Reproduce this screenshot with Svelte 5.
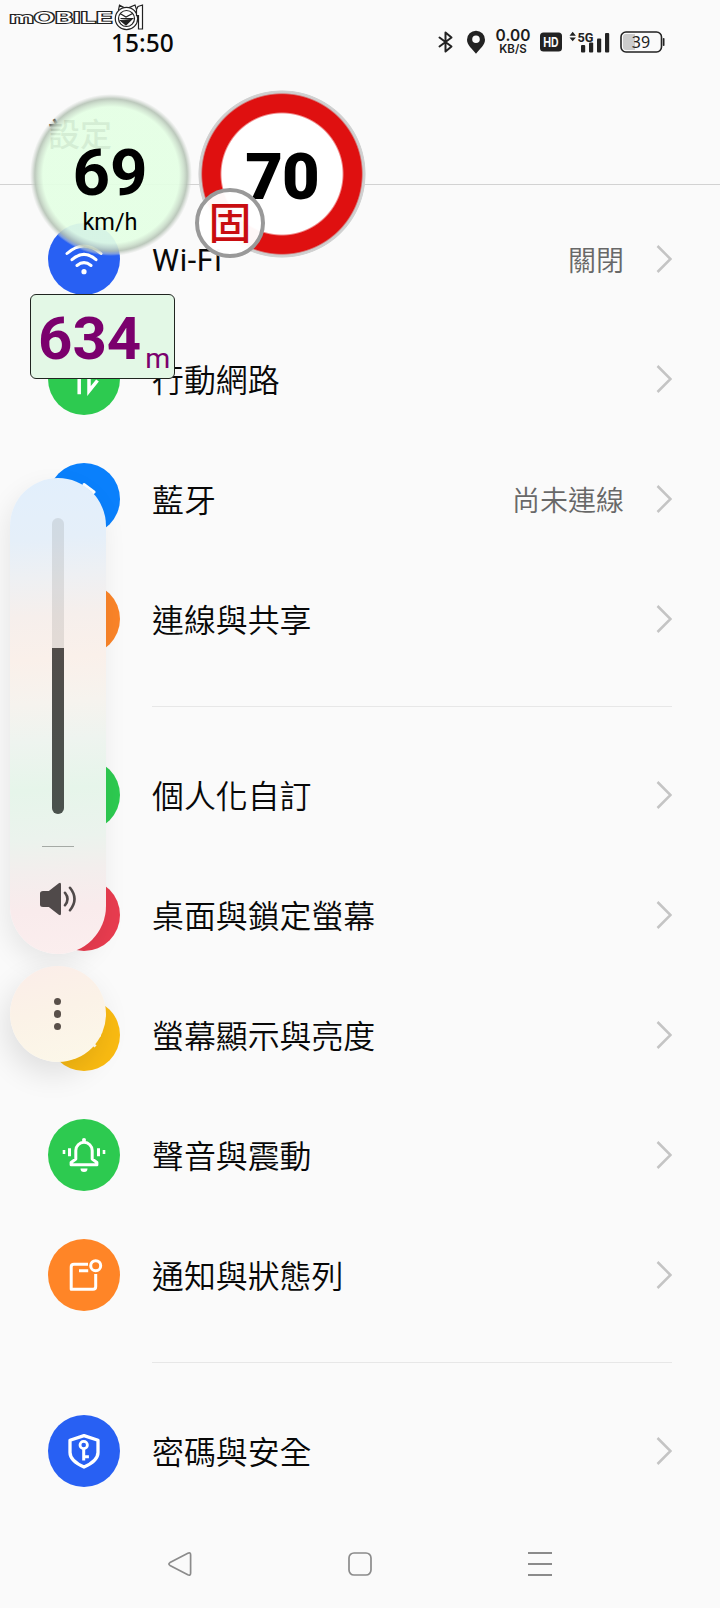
<script>
  const groups = [
    [
      { icon: 'wifi', color: '#2860f3', label: 'Wi-Fi', value: '關閉' },
      { icon: 'data', color: '#2dca50', label: '行動網路' },
      { icon: 'bluetooth', color: '#0a80fc', label: '藍牙', value: '尚未連線' },
      { icon: 'share', color: '#fa8428', label: '連線與共享' }
    ],
    [
      { icon: 'theme', color: '#2dca50', label: '個人化自訂' },
      { icon: 'home', color: '#e83c4f', label: '桌面與鎖定螢幕' },
      { icon: 'sun', color: '#fabb12', label: '螢幕顯示與亮度' },
      { icon: 'bell', color: '#2dca50', label: '聲音與震動' },
      { icon: 'notice', color: '#ff8527', label: '通知與狀態列' }
    ],
    [{ icon: 'shield', color: '#2860f3', label: '密碼與安全' }]
  ];
</script>

<div class="screen">
  <header class="status">
    <span class="time">15:50</span>
    <div class="indicators">
      <svg width="16" height="24" viewBox="0 0 16 24" fill="none" stroke="#222" stroke-width="2" stroke-linejoin="round" stroke-linecap="round">
        <path d="M1.500 7.500 13.500 16.500 7.500 21.500V2.500L13.500 7.500 1.500 16.500" />
      </svg>
      <svg class="pin" width="18" height="24" viewBox="0 0 18 24">
        <path fill="#222" fill-rule="evenodd" d="M9 .7a9 9 0 0 0-9 9c0 5.500 5.200 9 9 14 3.800-5 9-8.500 9-14a9 9 0 0 0-9-9zm0 4.800a3.800 3.800 0 1 1 0 7.600 3.800 3.800 0 0 1 0-7.600z" />
      </svg>
      <div class="rate"><b>0.00</b><span>KB/S</span></div>
      <svg class="hd" width="22" height="20" viewBox="0 0 22 20">
        <rect y=".5" width="22" height="19" rx="3.500" fill="#222" />
        <text x="3.300" y="14.900" textLength="15.400" lengthAdjust="spacingAndGlyphs" class="hdtext">HD</text>
      </svg>
      <svg class="signal" width="41" height="24" viewBox="0 0 41 24" fill="#222">
        <path d="M.5 5.700 3.700 1.800 6.900 5.700zM.5 7.600 3.700 11.300 6.900 7.600z" />
        <text x="8.500" y="11.500" textLength="16" lengthAdjust="spacingAndGlyphs" class="gen">5G</text>
        <rect x="12" y="15" width="4.200" height="7.500" rx="1" />
        <rect x="20" y="12.500" width="4.200" height="10" rx="1" />
        <rect x="28" y="8.500" width="4.200" height="14" rx="1" />
        <rect x="36" y="3" width="4.200" height="19.500" rx="1" />
      </svg>
      <svg class="battery" width="46" height="22" viewBox="0 0 46 22">
        <path d="M6 3h9v16H6a3 3 0 0 1-3-3V6a3 3 0 0 1 3-3z" fill="#ccc" />
        <rect x="1" y="1" width="40.500" height="20" rx="5" fill="none" stroke="#222" stroke-width="1.600" />
        <rect x="42.800" y="7" width="1.700" height="8" rx=".8" fill="#222" />
        <text x="21" y="16.600" text-anchor="middle" class="level">39</text>
      </svg>
    </div>
  </header>

  <div class="title">設定</div>

  <main>
    {#each groups as group}
      <section>
        {#each group as item}
          <div class="row">
            <svg class="icon" width="72" height="72" viewBox="0 0 72 72" fill="none" stroke="#fff" stroke-width="3" stroke-linejoin="round">
              <circle cx="36" cy="36" r="36" fill={item.color} stroke="none" />
              {#if item.icon === 'wifi'}
                <path stroke-linecap="round" d="M19 30.500Q36 15.500 53 30.500M24 36.700Q36 26 48 36.700M29 42.500Q36 36.800 43 42.500" />
                <circle cx="36" cy="48.700" r="2.600" fill="#fff" stroke="none" />
              {:else if item.icon === 'data'}
                <path stroke-width="3.500" stroke-linejoin="miter" d="M31.200 51.200V24L23 34M41 21V48L49.500 37.500" />
              {:else if item.icon === 'bluetooth'}
                <path d="M25 30 46 45 36 53V21.500L46 29 25 44" />
              {:else if item.icon === 'share'}
                <circle cx="36" cy="36" r="6" /><path d="M24 47a16 16 0 1 1 24 0" />
              {:else if item.icon === 'theme'}
                <path d="M25 22h22v28H25zM25 38h22" />
              {:else if item.icon === 'home'}
                <path d="M22 24h28v24H22zM30 53h12" />
              {:else if item.icon === 'sun'}
                <circle cx="36" cy="36" r="7" />
                <path d="M36 19v5M36 48v5M19 36h5M48 36h5M24 24l3.500 3.500M44.500 44.500 47.500 47.500M24 48l3.500-3.500M44.500 27.500 48 24" />
              {:else if item.icon === 'bell'}
                <path d="M27.800 40V31.500a8.200 8.200 0 0 1 16.400 0V40l4.700 3.500v2.300H23.100v-2.300zM21.500 29.200v8M50.500 29.200v8" />
                <path d="M14.700 33h2.600M54.700 33h2.600" stroke-width="4" />
                <path d="M32.500 49.500h7a3.500 3.500 0 0 1-7 0z" fill="#fff" stroke="none" />
                <circle cx="36" cy="21" r="2" fill="#fff" stroke="none" />
              {:else if item.icon === 'notice'}
                <path d="M40 25.300H26Q23.200 25.300 23.200 28V50.300H45Q47.700 50.300 47.700 47.500V35M31 31.700h9.200" />
                <circle cx="47.700" cy="26.700" r="5" />
              {:else}
                <path stroke-width="3.300" d="M36 20.600 22 25.200V37.500C22 44.500 28 48.500 36 52 44 48.500 50 44.500 50 37.500V25.200z" />
                <circle cx="35.700" cy="30" r="3.700" stroke-width="2.800" />
                <path d="M35.700 33.500V45.500M35.700 41.800h5.200" />
              {/if}
            </svg>
            <span class="label" class:latin={item.icon === 'wifi'}>{item.label}</span>
            {#if item.value}<span class="value">{item.value}</span>{/if}
            <svg class="chevron" width="16" height="28" viewBox="0 0 16 28" fill="none" stroke="#c4c4c4" stroke-width="2.500">
              <path d="M1.500 1 14.500 14 1.500 27" />
            </svg>
          </div>
        {/each}
      </section>
    {/each}
  </main>

  <nav>
    <svg width="24" height="24" viewBox="0 0 24 24"><path d="M2 10.600 19.800 1.200Q22.600.2 22.600 2.800V21.200Q22.600 23.800 19.800 22.800L2 13.400Q-.2 12 2 10.600z" /></svg>
    <svg width="24" height="24" viewBox="0 0 24 24"><rect x="1" y="1" width="22" height="22" rx="5" /></svg>
    <svg width="24" height="24" viewBox="0 0 24 24"><path d="M0 1h24M0 12h24M0 23h24" stroke-width="1.900" /></svg>
  </nav>

  <svg class="watermark" width="150" height="32" viewBox="0 0 150 32">
    <text x="9.500" y="23" textLength="103" lengthAdjust="spacingAndGlyphs" class="brand">mOBILE</text>
    <g fill="#fff" stroke="#222" stroke-width="1.200">
      <path d="M118.500 10 119.500 5.200 124 7.600H129L135 5 137 11" />
      <circle cx="126.500" cy="18.500" r="11.200" />
      <circle cx="126.500" cy="18.500" r="8" />
      <path fill="none" d="M120 13.500 126 17 133 13.200M120.500 18.500H133.500" />
      <path fill="#222" d="M120.500 20.500 131.500 19.500 126 25z" />
      <path d="M138 6.500 142.500 5V29H138.500V15.500H136.500V9.500z" />
    </g>
  </svg>

  <div class="speed"><b>69</b><span>km/h</span></div>
  <div class="limit"><b>70</b></div>
  <div class="fixed">固</div>
  <div class="distance"><b>634</b><span>m</span></div>

  <aside class="volume">
    <div class="track"><div class="fill"></div></div>
    <hr />
    <svg width="38" height="34" viewBox="0 0 38 34">
      <path fill="#504a4a" d="M4 9H9.800L19.800 1.300Q22 0 22 2.500V31.500Q22 34 19.800 32.700L9.800 25H4Q1 25 1 22.500V11.500Q1 9 4 9z" />
      <path fill="none" stroke="#504a4a" stroke-width="2.600" stroke-linecap="round" d="M26 10.800Q31 17 26 23.200M31 5.800Q40 17 31 28.200" />
    </svg>
  </aside>
  <div class="more"><i></i><i></i><i></i></div>
</div>

<style>
  :global(body) { margin: 0; background: #fafafa; }
  .screen {
    position: relative;
    width: 720px;
    height: 1608px;
    overflow: hidden;
    box-sizing: border-box;
    display: flex;
    flex-direction: column;
    background: #fafafa;
    color: #080808;
    font-family: "Noto Sans CJK TC", sans-serif;
  }
  .status {
    height: 84px;
    box-sizing: border-box;
    padding: 0 54px 0 111px;
    display: flex;
    align-items: center;
    justify-content: space-between;
    flex: none;
  }
  .time { font: 500 24.500px/30px "Noto Sans", sans-serif; padding-top: 1px; }
  .indicators { display: flex; align-items: center; }
  .pin { margin-left: 13px; }
  .rate {
    width: 36px;
    margin-left: 10px;
    display: flex;
    flex-direction: column;
    align-items: center;
    font-family: Inter, sans-serif;
    color: #1c1c1c;
  }
  .rate b { font-size: 15.500px; line-height: 14px; font-weight: 600; }
  .rate span { font-size: 11.500px; line-height: 12px; font-weight: 600; }
  .hd { margin-left: 9px; }
  .hdtext { font: 700 13.500px Inter, sans-serif; fill: #fafafa; }
  .signal { margin-left: 7px; }
  .gen { font: 700 13.500px Roboto, sans-serif; }
  .battery { margin-left: 10px; }
  .level { font: 400 16px "Noto Sans", sans-serif; fill: #222; }
  .title {
    flex: none;
    height: 101px;
    box-sizing: border-box;
    padding: 32px 0 0 48px;
    border-bottom: 1px solid #d2d2d2;
    font-size: 32px;
    line-height: 32px;
    font-weight: 500;
  }
  main { flex: none; padding-top: 14px; }
  section + section { position: relative; margin-top: 56px; }
  section + section::before {
    content: "";
    position: absolute;
    top: -29px;
    left: 152px;
    right: 48px;
    height: 1px;
    background: #e7e7e7;
  }
  .row {
    height: 120px;
    padding: 0 48px;
    display: flex;
    align-items: center;
  }
  .icon { flex: none; margin-right: 32px; }
  .label { flex: 1; font-size: 31.900px; line-height: 44px; font-weight: 350; padding-bottom: 2px; }
  .latin { font: 400 30.500px/44px Roboto, "Noto Sans", sans-serif; letter-spacing: .6px; padding: 3px 0 0; }
  .value { font-size: 28px; line-height: 38px; font-weight: 350; color: #686868; margin-right: 32px; padding-bottom: 1px; }
  .chevron { flex: none; }
  nav {
    flex: none;
    margin-top: 41px;
    padding: 0 168px;
    display: flex;
    justify-content: space-between;
    fill: none;
    stroke: #8b8b8b;
    stroke-width: 1.700;
  }
  .watermark { position: absolute; left: 0; top: 0; }
  .brand {
    font: 500 14.500px Inter, sans-serif;
    fill: #fff;
    stroke: #222;
    stroke-width: 1.800;
    paint-order: stroke;
  }
  .speed {
    position: absolute;
    left: 30px;
    top: 94px;
    width: 162px;
    height: 162px;
    border-radius: 50%;
    display: flex;
    flex-direction: column;
    align-items: center;
    color: #000;
    font-family: Roboto, sans-serif;
    background: radial-gradient(circle closest-side, rgba(228, 255, 228, .93) 84%, rgba(204, 224, 204, .9) 90%, rgba(180, 194, 180, .88) 94%, rgba(205, 212, 205, .5) 97.500%, rgba(250, 250, 250, 0) 100%);
  }
  .speed b { margin: 46px 2px 0 0; font-size: 65.500px; line-height: 66px; }
  .speed span { font-size: 23.500px; line-height: 30px; margin-top: 1px; margin-right: 2px; }
  .limit {
    position: absolute;
    left: 198px;
    top: 90px;
    width: 168px;
    height: 168px;
    border-radius: 50%;
    text-align: center;
    font: 700 65px/175px Roboto, sans-serif;
    color: #000;
    background: radial-gradient(circle closest-side, #fff 71.500%, #df1010 73.800%, #df1010 94.500%, #ccc 96.500%, #d2d2d2 99%, transparent 100%);
  }
  .limit b { letter-spacing: -1px; }
  .fixed {
    position: absolute;
    left: 195px;
    top: 188px;
    width: 70px;
    height: 70px;
    box-sizing: border-box;
    border: 4px solid #999;
    border-radius: 50%;
    background: rgba(255, 255, 255, .97);
    color: #c90d10;
    font-size: 43px;
    font-weight: 500;
    line-height: 57px;
    text-align: center;
  }
  .distance {
    position: absolute;
    left: 30px;
    top: 294px;
    width: 145px;
    height: 85px;
    box-sizing: border-box;
    padding-left: 7px;
    border: 1.500px solid #202520;
    border-radius: 6px;
    background: #e3f8e6;
    color: #7b006d;
    font-family: Roboto, sans-serif;
    display: flex;
    align-items: baseline;
  }
  .distance b { font-size: 60px; line-height: 87px; }
  .distance span { font-size: 28.500px; position: relative; top: 9px; left: 4px; }
  .volume {
    position: absolute;
    left: 10px;
    top: 478px;
    width: 96px;
    height: 476px;
    box-sizing: border-box;
    padding-top: 40px;
    border-radius: 48px;
    display: flex;
    flex-direction: column;
    align-items: center;
    background: linear-gradient(176deg, #fbeeee 0%, #f9ebec 10%, #f3eeed 18%, #ebf3ed 25%, #e6f5ea 35%, #eef4ef 45%, #f6f3ee 53%, #faf0ea 62%, #f6efec 71%, #eef0f3 79%, #e5eff9 87%, #e2effc 100%);
    box-shadow: -4px 10px 26px rgba(0, 0, 0, .08);
  }
  .track { width: 12px; height: 296px; border-radius: 6px; overflow: hidden; background: rgba(90, 90, 90, .14); display: flex; align-items: flex-end; }
  .fill { width: 100%; height: 166px; background: linear-gradient(#524d4a, #4c504c 60%, #4a524d); }
  .volume hr { width: 32px; height: 1px; border: 0; margin: 32px 0 35px; background: #a5aaa5; }
  .volume { background: linear-gradient(176deg, #e2effc 0%, #e5eff9 13%, #eef0f3 21%, #f6efec 29%, #faf0ea 38%, #f6f3ee 47%, #eef4ef 55%, #e6f5ea 65%, #ebf3ed 75%, #f3eeed 82%, #f9ebec 90%, #fbeeee 100%); }
  .more {
    position: absolute;
    left: 10px;
    top: 966px;
    width: 96px;
    height: 96px;
    border-radius: 50%;
    display: flex;
    flex-direction: column;
    align-items: center;
    justify-content: center;
    gap: 5px;
    background: linear-gradient(165deg, #fbede9 0%, #fbf2e7 45%, #fcf8e9 100%);
    box-shadow: -5px 12px 30px rgba(0, 0, 0, .11);
  }
  .more i { width: 7.400px; height: 7.400px; border-radius: 50%; background: #59504a; margin-right: 1px; }
</style>
